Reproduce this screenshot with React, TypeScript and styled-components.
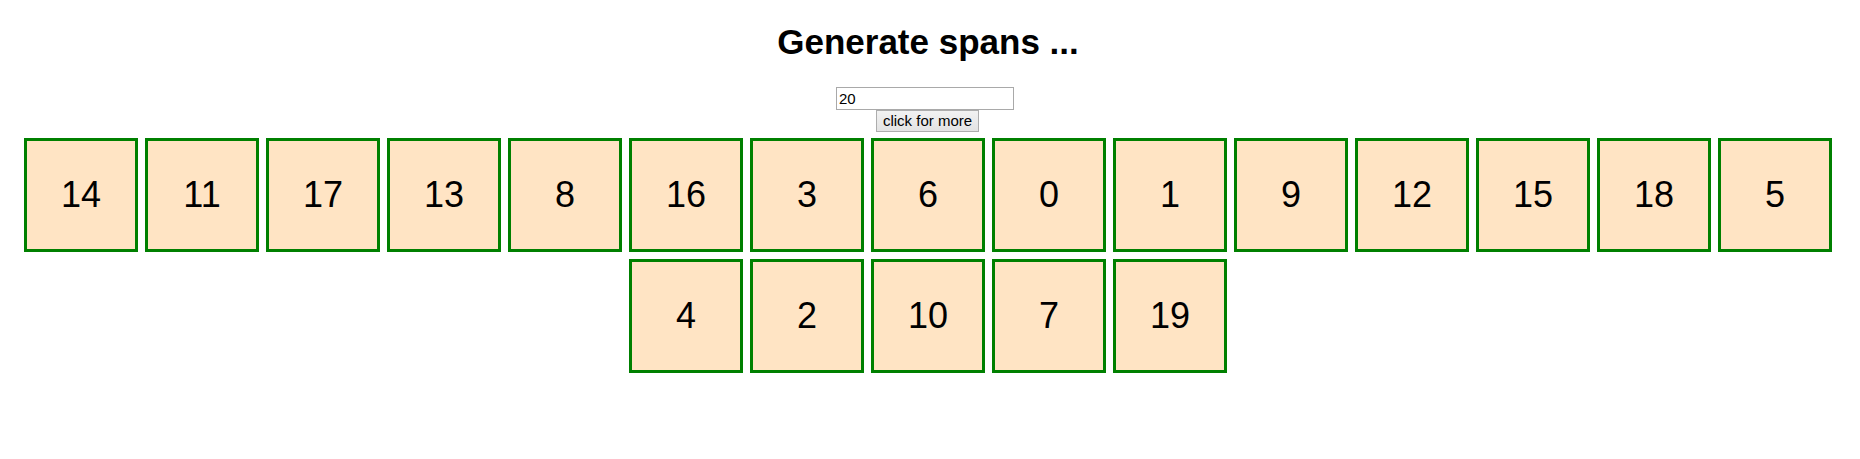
import React from "react";
import styled, { createGlobalStyle } from "styled-components";

const Global = createGlobalStyle`
  html, body { margin: 0; padding: 0; background: #ffffff; }
  body { font-family: "Liberation Sans", Arial, sans-serif; color: #000; }
`;

const Page = styled.div`
  display: flex;
  flex-direction: column;
  align-items: center;
  padding: 22px 8px 0;
`;

const Title = styled.h1`
  margin: 0 0 25px;
  padding-right: 4px;
  font-family: "Liberation Sans", Arial, sans-serif;
  font-size: 35px;
  font-weight: bold;
  line-height: 40px;
`;

const Controls = styled.div<{ $shift: number }>`
  display: flex;
  justify-content: center;
  padding-right: ${(p) => p.$shift}px;
`;

const CountInput = styled.input`
  box-sizing: border-box;
  width: 178px;
  height: 23px;
  margin: 0;
  padding: 1px 2px;
  border: 1px solid #a9a9a9;
  font-family: "Liberation Sans", Arial, sans-serif;
  font-size: 15px;
  color: #000;
  outline: none;
`;

const MoreButton = styled.button`
  box-sizing: border-box;
  width: 103px;
  height: 22px;
  margin: 0;
  padding: 0 5px;
  border: 1px solid #adadad;
  border-radius: 0;
  background: linear-gradient(#f2f2f2, #e3e3e3);
  font-family: "Liberation Sans", Arial, sans-serif;
  font-size: 15px;
  line-height: 18px;
  color: #000;
  white-space: nowrap;
`;

const Grid = styled.div`
  display: flex;
  flex-wrap: wrap;
  justify-content: center;
  gap: 7px;
  margin-top: 6px;
  width: 1808px;
  padding-right: 4px;
`;

const Tile = styled.span`
  box-sizing: border-box;
  width: 114px;
  height: 114px;
  border: 3px solid #008000;
  background: #ffe4c4;
  display: flex;
  align-items: center;
  justify-content: center;
  font-family: "Liberation Sans", Arial, sans-serif;
  font-size: 36px;
`;

const numbers = [14, 11, 17, 13, 8, 16, 3, 6, 0, 1, 9, 12, 15, 18, 5, 4, 2, 10, 7, 19];

export default function App() {
  return (
    <>
      <Global />
      <Page>
        <Title>Generate spans ...</Title>
        <Controls $shift={10}>
          <CountInput defaultValue="20" />
        </Controls>
        <Controls $shift={5}>
          <MoreButton>click for more</MoreButton>
        </Controls>
        <Grid>
          {numbers.map((n) => (
            <Tile key={n}>{n}</Tile>
          ))}
        </Grid>
      </Page>
    </>
  );
}
